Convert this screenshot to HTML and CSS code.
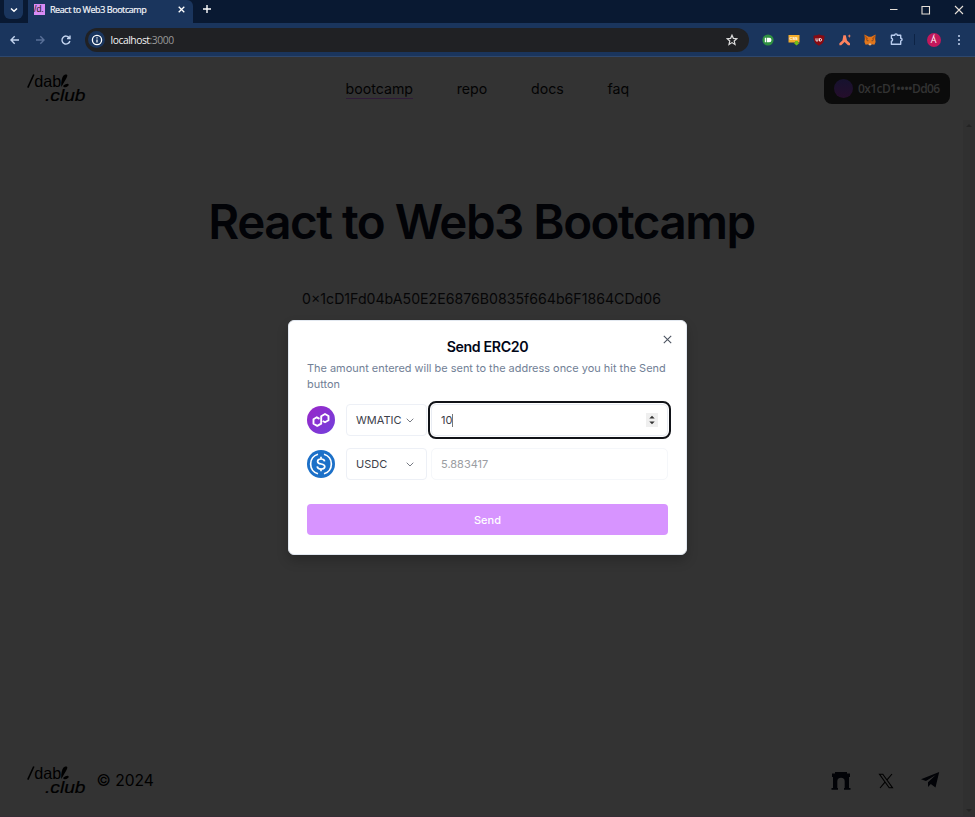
FILE: index.html
```html
<!DOCTYPE html>
<html lang="en">
<head>
<meta charset="utf-8">
<title>React to Web3 Bootcamp</title>
<link rel="stylesheet" href="styles.css">
</head>
<body>
<div class="tabs">
  <div class="tab-search"><svg width="8" height="6" viewBox="0 0 8 6"><path d="M1 1.500 4 4.300 7 1.500" fill="none" stroke="#fff" stroke-width="1.500"/></svg></div>
  <div class="tab">
    <span class="favicon">/d.</span>
    <span class="tab-title">React to Web3 Bootcamp</span>
    <svg width="7" height="7" viewBox="0 0 7 7"><path d="M.7.7l5.600 5.600M6.300.7.7 6.300" stroke="#fff" stroke-width="1.300"/></svg>
  </div>
  <svg class="new-tab" width="8" height="8" viewBox="0 0 8 8"><path d="M4 0v8M0 4h8" stroke="#fff" stroke-width="1.400"/></svg>
  <svg class="window-controls" width="75" height="10" viewBox="0 0 75 10" fill="none" stroke="#e6dfd8" stroke-width="1.100"><path d="M1 4.500h7.500M66 1l8 8M74 1l-8 8"/><path d="M33 1.500h7.500V9H33z"/></svg>
</div>

<div class="toolbar">
  <svg width="75" height="16" viewBox="0 0 75 16" fill="none" stroke-width="1.400">
    <path d="M19 8h-8m3.700-3.700L11 8l3.700 3.700" stroke="#c4d5f0"/>
    <path d="M36 8h8m-3.700-3.700L44 8l-3.700 3.700" stroke="#597098"/>
    <path d="M69.300 5.800a4 4 0 1 0 .6 3.200M70 3.500v3h-3" stroke="#c4d5f0"/>
  </svg>
  <div class="address">
    <span class="info"><svg width="12" height="12" viewBox="0 0 12 12"><circle cx="6" cy="6" r="4.600" fill="none" stroke="#fff" stroke-width="1.300"/><path d="M6 5.400v3M6 3.300v1.200" stroke="#fff" stroke-width="1.200"/></svg></span>
    <span class="url">localhost<span>:3000</span></span>
    <svg class="star" width="12" height="12" viewBox="0 0 12 12"><path d="M6 1.200 7.350 4.350 10.800 4.700 8.200 7 9 10.400 6 8.600 3 10.400 3.800 7 1.200 4.700 4.650 4.350z" fill="none" stroke="#dcdcdc" stroke-width="1.200"/></svg>
  </div>
  <div class="extensions">
    <svg width="12" height="12" viewBox="0 0 12 12"><circle cx="6" cy="6" r="5.600" fill="#2f9142"/><path d="M2.800 3.700h1.500v4.600H2.800zM5 3.700h2.200a2.300 2.300 0 0 1 0 4.600H5z" fill="#fff"/></svg>
    <svg width="12" height="12" viewBox="0 0 12 12"><path d="M.5 1h11v7.500H.5z" fill="#f3ad2c"/><path d="M7 7h3v2h1.500L8.500 11.500 5.800 9H7z" fill="#72bd18"/><text x="1.500" y="6.300" class="css-mark">CSS</text></svg>
    <svg width="12" height="12" viewBox="0 0 12 12"><path d="M6 .3c1.700 1.100 3.600 1.400 5.500 1.400 0 5-1 7.700-5.500 10C1.500 9.400.5 6.700.5 1.700 2.400 1.700 4.300 1.400 6 .3z" fill="#870a12"/><path d="M3 4.300v1.900a1 1 0 0 0 2 0V4.300M6.500 4.500h.8a1.300 1.300 0 0 1 0 2.600h-.8z" fill="none" stroke="#fff" stroke-width=".9"/></svg>
    <svg width="12" height="12" viewBox="0 0 12 12"><path d="M4.400 1.200h2.400L8 6.500l3 2.800v1.900H9L5.600 7.900l-3.400 3.300H.4V9.300L3.400 6.500z" fill="#ff835f"/><path d="M10.300.3l.5 1.300 1.200.5-1.200.5-.5 1.300-.5-1.300-1.200-.5 1.200-.5z" fill="#ff835f"/></svg>
    <svg width="12" height="12" viewBox="0 0 12 12"><path d="M.5.6 4.700 2.700h2.600L11.500.6l-.3 4.500.4 3-1.200 2.700-2.600-.5L6.800 11.500H5.200L4.200 10.300l-2.600.5L.4 8.100l.4-3z" fill="#e2761b"/><path d="M.5.6 4 4.600 2.500 7zM11.500.6 8 4.600 9.500 7z" fill="#b5530e"/><path d="M3.300 6l1.500 1-1.300.2zM8.700 6 7.200 7l1.300.2z" fill="#233447"/><path d="M5 9.500h2l.3 1.500H4.700z" fill="#c9bba8"/></svg>
    <svg width="13" height="13" viewBox="0 0 13 13"><path d="M1.400 2.200h3.300a1.300 1.300 0 0 1 2.600 0h3.400v3a1.300 1.300 0 0 1 0 2.700v3.400H1.400V8.300a1.600 1.600 0 0 0 0-3.100z" fill="none" stroke="#b9cdef" stroke-width="1.400" stroke-linejoin="round"/></svg>
  </div>
  <span class="divider"></span>
  <span class="avatar">Á</span>
  <svg class="kebab" width="4" height="12" viewBox="0 0 4 12" fill="#c4d5f0"><circle cx="2" cy="2" r="1"/><circle cx="2" cy="6" r="1"/><circle cx="2" cy="10" r="1"/></svg>
</div>

<div class="page">
  <header>
    <svg class="logo" viewBox="0 0 60 30">
      <path d="M.8 13.600 6.800 .5" stroke="#000" stroke-width="1.600"/>
      <text class="logo-dab" x="7.300" y="13.300" textLength="27" lengthAdjust="spacingAndGlyphs">dab</text>
      <path d="M36.500 1.600c1.200-1.200 4-1.700 3.800.1-.3 2.100-3.200 6.300-6 11.400-.3-3.500.2-9.300 2.200-11.500z"/>
      <ellipse cx="39" cy="11.600" rx="2.900" ry="1.400" transform="rotate(-20 39 11.600)"/>
      <text class="logo-club" x="18" y="26.500" textLength="40.500" lengthAdjust="spacingAndGlyphs">.club</text>
    </svg>
    <nav><a class="active">bootcamp</a><a>repo</a><a>docs</a><a>faq</a></nav>
    <div class="wallet"><i></i><span>0x1cD1••••Dd06</span></div>
  </header>
  <div class="scroll-area">
    <div class="content">
      <main>
        <h1>React to Web3 Bootcamp</h1>
        <p>0×1cD1Fd04bA50E2E6876B0835f664b6F1864CDd06</p>
      </main>
      <footer>
        <svg class="logo" viewBox="0 0 60 30">
          <path d="M.8 13.600 6.800 .5" stroke="#000" stroke-width="1.600"/>
          <text class="logo-dab" x="7.300" y="13.300" textLength="27" lengthAdjust="spacingAndGlyphs">dab</text>
          <path d="M36.500 1.600c1.200-1.200 4-1.700 3.800.1-.3 2.100-3.200 6.300-6 11.400-.3-3.500.2-9.300 2.200-11.500z"/>
          <ellipse cx="39" cy="11.600" rx="2.900" ry="1.400" transform="rotate(-20 39 11.600)"/>
          <text class="logo-club" x="18" y="26.500" textLength="40.500" lengthAdjust="spacingAndGlyphs">.club</text>
        </svg>
        <span class="copyright">© 2024</span>
        <div class="social">
          <svg width="20" height="20" viewBox="0 0 20 20" fill="#020307"><path d="M4 1h12v1.500h3V6h-1v11h1.500v1.700H13V17h.7v-6.500a3.700 3.700 0 0 0-7.400 0V17H7v1.700H.5V17H2V6H1V2.500h3z"/></svg>
          <svg width="16" height="16" viewBox="0 0 16 16" fill="none" stroke="#000"><path d="M1.500 1.200h3.300l9.700 13.600h-3.300zM14 1 9 6.800M7 9.200 2 15" stroke-width="1.100"/></svg>
          <svg width="20" height="18" viewBox="0 0 20 18" fill="#020307"><path d="M19.200 0 1 7.200l5 1.900L15.700 3 8 10.300V15l2.800-3 4.700 3.500z"/></svg>
        </div>
      </footer>
    </div>
    <div class="scrollbar"><i class="up"></i><i class="down"></i></div>
  </div>
</div>

<div class="modal">
  <svg class="close" width="9" height="9" viewBox="0 0 9 9"><path d="M.8.8l7.400 7.400M8.200.8.8 8.200" stroke="#4b5360" stroke-width="1.100"/></svg>
  <h2>Send ERC20</h2>
  <p>The amount entered will be sent to the address once you hit the Send<br>button</p>
  <div class="row">
    <svg width="28" height="28" viewBox="0 0 28 28"><defs><linearGradient id="poly" x1="0" y1="0" x2="1" y2="1"><stop offset="0" stop-color="#9a27c8"/><stop offset="1" stop-color="#7140dc"/></linearGradient></defs><circle cx="14" cy="14" r="14" fill="url(#poly)"/><path d="M12.500 12.800 9.800 11.300 6.500 13.200V17.700L10.300 19.900 14.200 17.700V10.200L18 8 21.500 10V14.300L18 16.300 15.800 15" fill="none" stroke="#fff" stroke-width="1.900" stroke-linejoin="round"/></svg>
    <div class="select"><span>WMATIC</span><svg width="8" height="5" viewBox="0 0 8 5"><path d="M.7.7 4 4 7.300.7" fill="none" stroke="#777b83"/></svg></div>
    <div class="input focused"><span>10</span><i class="caret"></i><svg class="spinner" width="12" height="14" viewBox="0 0 12 14"><path d="M0 0h12v14H0z" fill="#efefef"/><path d="M3.300 5.500 6 2.700l2.700 2.800zM3.300 8.500 6 11.300l2.700-2.800z" fill="#333"/></svg></div>
  </div>
  <div class="row">
    <svg width="28" height="28" viewBox="0 0 28 28"><circle cx="14" cy="14" r="14" fill="#1c70c8"/><path d="M11 4.200a10.200 10.200 0 0 0 0 19.600M17 4.200a10.200 10.200 0 0 1 0 19.600M17.600 11.300c-.2-1.500-1.500-2.300-3.500-2.300s-3.500.8-3.500 2.400c0 3.700 7.200 1.500 7.200 5.100 0 1.600-1.500 2.500-3.700 2.500s-3.700-.9-3.900-2.600M14 6.800V9m0 10v2.200" fill="none" stroke="#fff" stroke-width="1.700"/></svg>
    <div class="select"><span>USDC</span><svg width="8" height="5" viewBox="0 0 8 5"><path d="M.7.7 4 4 7.300.7" fill="none" stroke="#777b83"/></svg></div>
    <div class="input disabled"><span>5.883417</span></div>
  </div>
  <button>Send</button>
</div>
</body>
</html>
```
FILE: styles.css
```css
* { box-sizing: border-box; }
body { margin: 0; height: 817px; overflow: hidden; display: flex; flex-direction: column; position: relative; background: #333; font-family: Inter, sans-serif; }
svg { display: block; flex: none; }
h1, h2, p { margin: 0; }

.tabs { height: 23px; flex: none; display: flex; align-items: flex-start; background: #091932; }
.tab-search { width: 19px; height: 19px; margin-left: 4px; border-radius: 0 0 6px 6px; background: #1a355d; display: flex; align-items: center; justify-content: center; }
.tab { width: 165px; height: 23px; margin-left: 5px; padding: 0 8px 4px 6px; background: #1a355d; display: flex; align-items: center; border-radius: 0 6px 0 0; }
.favicon { width: 11px; height: 11px; background: #d98bf4; color: #222; font: 9px/11px "Liberation Sans", sans-serif; letter-spacing: -.1px; }
.tab-title { flex: 1; margin-left: 5px; color: #f4f6fa; font: 9px/14px "Open Sans", sans-serif; letter-spacing: -.43px; white-space: nowrap; -webkit-text-stroke: .2px; }
.new-tab { margin: 5px 0 0 10px; }
.window-controls { margin: 5px 11px 0 auto; }

.toolbar { height: 34px; flex: none; display: flex; align-items: center; background: #1a355d; border-bottom: 1px solid #2e476d; }
.address { width: 664px; height: 24px; margin-left: 10px; padding: 0 11px 0 3px; border-radius: 12px; background: #202124; display: flex; align-items: center; }
.info { width: 17px; height: 17px; border-radius: 50%; background: #1a355d; display: flex; align-items: center; justify-content: center; }
.url { margin-left: 5.500px; color: #f3f3f3; font: 10.300px/14px "Open Sans", sans-serif; letter-spacing: -.45px; }
.url span { color: #999; }
.star { margin-left: auto; }
.extensions { display: flex; gap: 13.500px; align-items: center; margin-left: 13px; }
.css-mark { font: bold 4px "Liberation Sans", sans-serif; fill: #fff; }
.divider { width: 1px; height: 11px; margin: 0 12px 0 11px; background: #0d2345; }
.avatar { width: 14px; height: 14px; border-radius: 50%; background: #c2185b; color: #fff; font: 9px/14px "Open Sans", sans-serif; text-align: center; }
.kebab { margin-left: 16px; }

.page { flex: 1; display: flex; flex-direction: column; background: #333; border-bottom: 1px solid #352d35; }
header { height: 63px; padding: 0 25px 0 27px; display: flex; align-items: center; }
.logo { width: 60px; height: 30px; }
.logo-dab { font: 16.500px "Liberation Sans", sans-serif; }
.logo-club { font: italic 16.500px "Liberation Sans", sans-serif; stroke: #000; stroke-width: .2px; }
nav { display: flex; gap: 43.700px; margin-left: 258.500px; font-size: 14.200px; line-height: 19px; color: #030304; }
nav a { border-bottom: 1px solid transparent; }
nav a.active { border-bottom-color: #2f1b38; }
.wallet { width: 126px; height: 31px; margin-left: auto; padding: 0 9px 0 10px; border-radius: 8px; background: #0b0b0b; display: flex; align-items: center; gap: 5px; color: #333; font: 600 12px/16px "Open Sans", sans-serif; letter-spacing: -.6px; white-space: nowrap; }
.wallet i { width: 19px; height: 19px; flex: none; border-radius: 50%; background: linear-gradient(#16122f, #250e2b); }
.scroll-area { flex: 1; display: flex; }
.content { flex: 1; display: flex; flex-direction: column; }
main { flex: 1; display: flex; flex-direction: column; align-items: center; padding-top: 78px; }
h1 { font-size: 47.500px; line-height: 48px; font-weight: 600; letter-spacing: -1.480px; color: #020307; white-space: nowrap; }
main p { margin-top: 43px; font-size: 14.150px; line-height: 20px; color: #060607; white-space: nowrap; }
footer { height: 71px; padding: 0 23px 0 27px; display: flex; align-items: center; }
.copyright { margin: -1px 0 0 9.500px; font-size: 15.600px; }
.social { margin-left: auto; display: flex; align-items: center; gap: 26.500px; }
.scrollbar { width: 12px; background: #303030; display: flex; flex-direction: column; justify-content: space-between; align-items: center; padding: 4px 0; }
.scrollbar i { border: 3px solid transparent; }
.up { border-top-width: 0 !important; border-bottom-color: #242424 !important; }
.down { border-bottom-width: 0 !important; border-top-color: #242424 !important; }

.modal { position: absolute; left: 288px; top: 320px; width: 399px; height: 235px; padding: 18px 18px 0; border: 1px solid #e2e8f0; border-radius: 6px; background: #fff; box-shadow: 0 6px 12px #0003; }
.close { position: absolute; right: 14px; top: 14px; }
h2 { text-align: center; font-size: 14.200px; line-height: 16px; font-weight: 600; letter-spacing: -.35px; color: #020617; }
.modal p { margin-top: 6px; font-size: 10.950px; line-height: 15.500px; color: #718096; white-space: nowrap; }
.row { height: 32px; display: flex; align-items: center; margin-top: 12px; font-size: 11px; color: #3d414a; }
.select { width: 81px; height: 32px; margin-left: 11px; padding: 0 12px 0 9px; border: 1px solid #edf0f6; border-radius: 4px; display: flex; align-items: center; justify-content: space-between; }
.input { flex: 1; height: 32px; margin-left: 4px; padding: 0 9px; border: 1px solid #e8ecf3; border-radius: 5px; display: flex; align-items: center; }
.focused { outline: 2px solid #111318; outline-offset: 1px; }
.caret { width: 1px; height: 13px; background: #777; }
.spinner { margin-left: auto; }
.disabled { border-color: #f5f7fa; color: #9b9da2; }
button { display: block; width: 361px; height: 31px; margin-top: 24px; border: 0; border-radius: 4px; background: #d794ff; color: #fff; font: 500 11px Inter, sans-serif; }
```
